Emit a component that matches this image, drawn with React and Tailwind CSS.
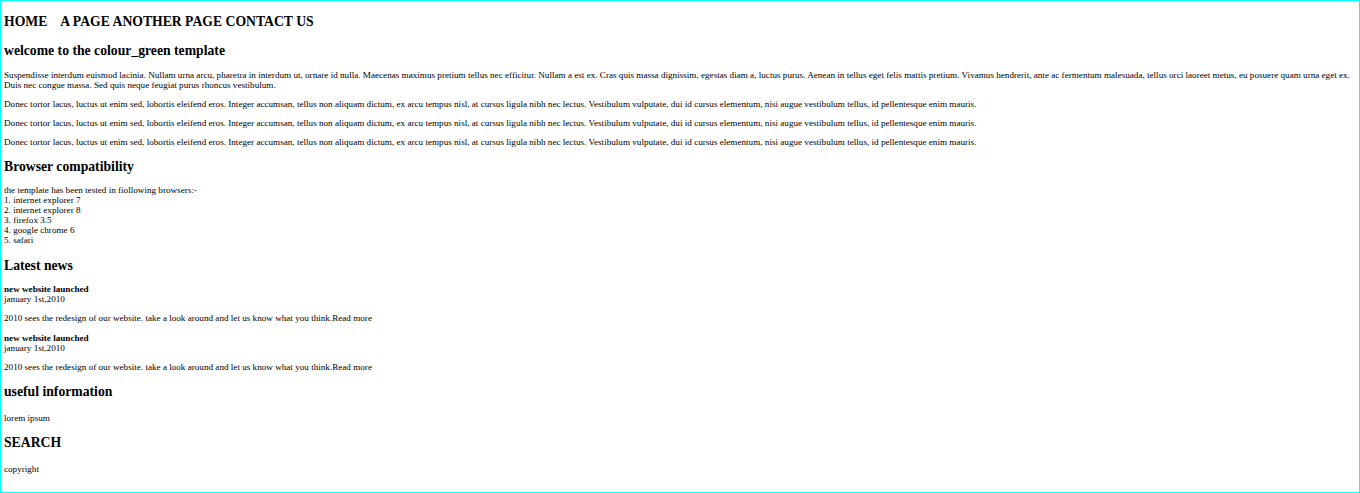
import React from "react";

const donec =
  "Donec tortor lacus, luctus ut enim sed, lobortis eleifend eros. Integer accumsan, tellus non aliquam dictum, ex arcu tempus nisl, at cursus ligula nibh nec lectus. Vestibulum vulputate, dui id cursus elementum, nisi augue vestibulum tellus, id pellentesque enim mauris.";

const browsers = [
  "1. internet explorer 7",
  "2. internet explorer 8",
  "3. firefox 3.5",
  "4. google chrome 6",
  "5. safari",
];

const NewsItem = () => (
  <div>
    <div className="font-bold leading-[10px]">new website launched</div>
    <div className="leading-[10px]">january 1st,2010</div>
    <p className="mt-[9px] leading-[10px]">
      2010 sees the redesign of our website. take a look around and let us know what you think.Read more
    </p>
  </div>
);

const App = () => {
  return (
    <div
      className="h-[493px] border border-[#00ffff] bg-white px-[3px] text-black text-[9.15px] overflow-hidden"
      style={{ fontFamily: '"Liberation Serif", "Times New Roman", serif' }}
    >
      <div className="pt-[12px] text-[13.7px] font-bold leading-[17px] whitespace-pre">
        HOME    A PAGE ANOTHER PAGE CONTACT US
      </div>

      <h2 className="mt-[13px] text-[13.7px] font-bold leading-[16px]">
        welcome to the colour_green template
      </h2>

      <p className="mt-[11px] leading-[10px]">
        Suspendisse interdum euismod lacinia. Nullam urna arcu, pharetra in interdum ut, ornare id nulla. Maecenas maximus pretium tellus nec efficitur. Nullam a est ex. Cras quis massa dignissim, egestas diam a, luctus purus. Aenean in tellus eget felis mattis pretium. Vivamus hendrerit, ante ac fermentum malesuada, tellus orci laoreet metus, eu posuere quam urna eget ex. Duis nec congue massa. Sed quis neque feugiat purus rhoncus vestibulum.
      </p>
      <p className="mt-[9px] leading-[10px]">{donec}</p>
      <p className="mt-[9px] leading-[10px]">{donec}</p>
      <p className="mt-[9px] leading-[10px]">{donec}</p>

      <h2 className="mt-[11px] text-[13.7px] font-bold leading-[17px]">Browser compatibility</h2>
      <div className="mt-[10px] leading-[10px]">
        <div>the template has been tested in fiollowing browsers:-</div>
        {browsers.map((b) => (
          <div key={b}>{b}</div>
        ))}
      </div>

      <h2 className="mt-[12px] text-[13.7px] font-bold leading-[17px]">Latest news</h2>
      <div className="mt-[10px] flex flex-col gap-[10px]">
        <NewsItem />
        <NewsItem />
      </div>

      <h2 className="mt-[11px] text-[13.7px] font-bold leading-[17px]">useful information</h2>
      <p className="mt-[13px] leading-[10px]">lorem ipsum</p>

      <h2 className="mt-[11px] text-[13.7px] font-bold leading-[17px]">SEARCH</h2>
      <p className="mt-[13px] leading-[10px]">copyright</p>
    </div>
  );
};

export default App;
